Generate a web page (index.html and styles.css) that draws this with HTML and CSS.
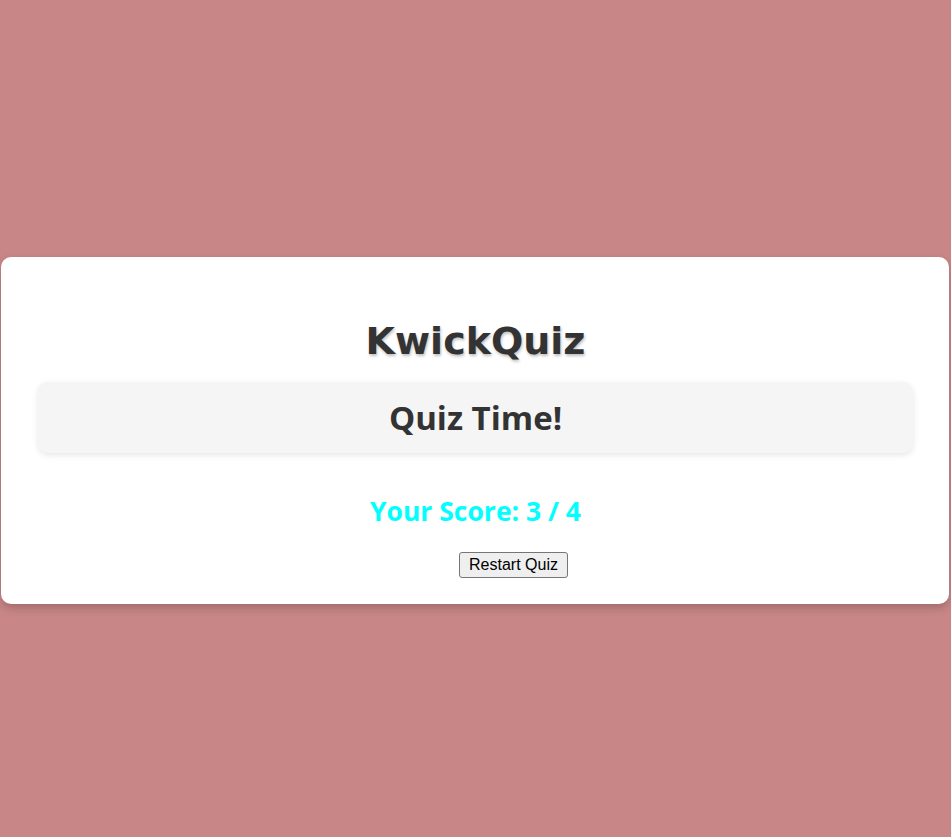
FILE: index.html
```html
<!DOCTYPE html>
<html>
<head>
<meta charset="utf-8">
<link rel="stylesheet" href="styles.css">
</head>
<body>
<div class="card">
  <h1 class="brand">KwickQuiz</h1>
  <div class="panel">
    <h2 class="panel-title">Quiz Time!</h2>
  </div>
  <p class="score">Your Score: 3 / 4</p>
  <div class="actions">
    <button class="restart">Restart Quiz</button>
  </div>
</div>
</body>
</html>
```
FILE: styles.css
```css
html, body {
  margin: 0;
  padding: 0;
}
body {
  background: #c98686;
  height: 837px;
  padding-top: 257px;
  box-sizing: border-box;
  font-family: "Open Sans", "Noto Sans", sans-serif;
}
.card {
  margin: 0 2px 0 1px;
  background: #ffffff;
  border-radius: 10px;
  box-shadow: 0 4px 10px rgba(0, 0, 0, 0.2);
  padding: 56px 36px 26px 37px;
  text-align: center;
}
.brand {
  margin: 0;
  font-family: "Comic Sans MS", "DejaVu Sans", sans-serif;
  font-weight: bold;
  font-size: 38px;
  line-height: 56px;
  color: #333333;
  text-shadow: 1px 2px 3px rgba(0, 0, 0, 0.25);
}
.panel {
  margin-top: 13px;
  background: #f5f5f5;
  border-radius: 10px;
  box-shadow: 0 2px 6px rgba(0, 0, 0, 0.1);
  height: 71px;
  display: flex;
  align-items: center;
  justify-content: center;
}
.panel-title {
  margin: 0;
  font-size: 33px;
  font-weight: bold;
  color: #333333;
  line-height: 40px;
}
.score {
  margin: 40px 0 0;
  font-size: 26.5px;
  font-weight: bold;
  color: #00ffff;
  line-height: 36px;
}
.actions {
  margin-top: 23px;
}
.restart {
  margin-left: 76px;
  font-family: "Liberation Sans", Arial, sans-serif;
  font-size: 16px;
  padding: 1px 9px;
  background: #efefef;
  border: 1px solid #767676;
  border-radius: 3px;
  color: #000;
  height: 26px;
}
```
